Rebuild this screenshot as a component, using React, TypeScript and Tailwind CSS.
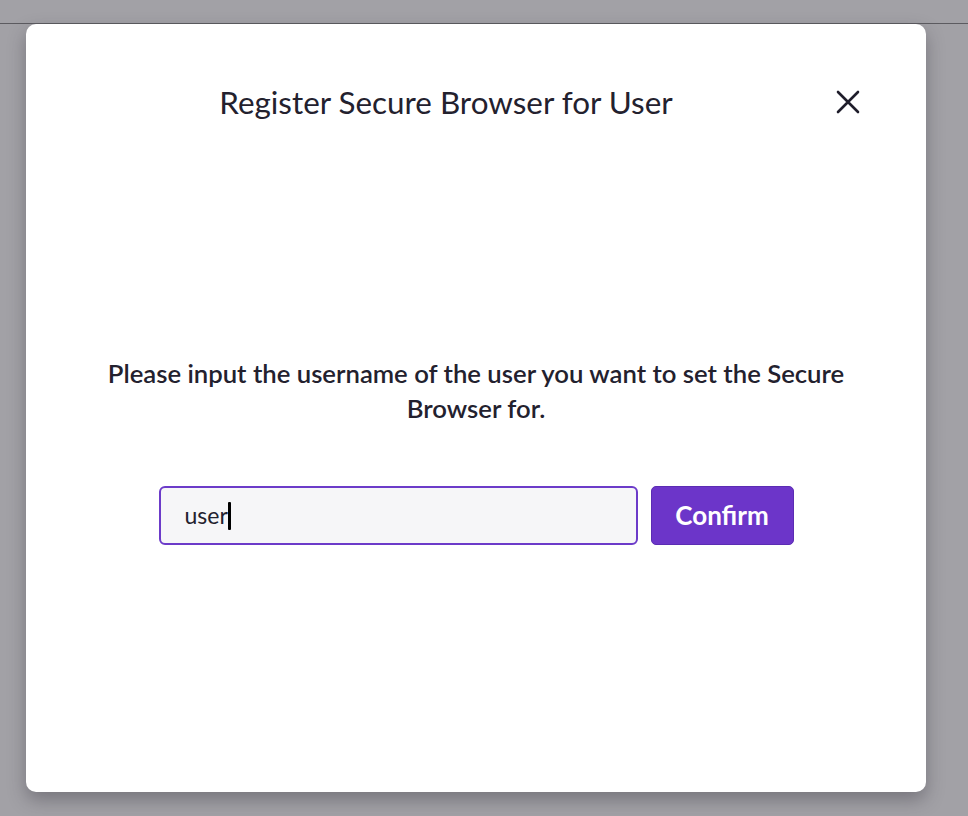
import React from "react";

function CloseIcon() {
  return (
    <svg width="24" height="24" viewBox="0 0 24 24" fill="none">
      <path d="M2 2L22 22M22 2L2 22" stroke="#1f1d2b" strokeWidth="2.6" strokeLinecap="round" />
    </svg>
  );
}

export default function App() {
  return (
    <div
      className="min-h-screen bg-[#a2a1a6] overflow-hidden"
      style={{ fontFamily: "Lato, 'Noto Sans', sans-serif" }}
    >
      <div className="h-[24px] border-b border-[#5c5b60]" />

      <div className="ml-[26px] w-[900px] h-[768px] rounded-[10px] bg-white shadow-[0_8px_18px_rgba(40,38,48,0.35)] flex flex-col">
        <div className="flex items-center pt-[48px] px-12">
          <h2 className="flex-1 text-center text-[31.4px] text-[#23212e] leading-[60px]">
            Register Secure Browser for User
          </h2>
          <button className="w-[60px] h-[60px] flex items-center justify-center">
            <CloseIcon />
          </button>
        </div>

        <p className="mt-[224px] text-center text-[25.7px] leading-[35px] font-semibold text-[#23212e]">
          Please input the username of the user you want to set the Secure
          <br />
          Browser for.
        </p>

        <div className="mt-[60px] flex justify-center gap-[13px]">
          <div className="w-[479px] h-[59px] border-2 border-[#6c3bc9] rounded-[6px] bg-[#f6f6f8] pl-[24px] flex items-center text-[23px] text-[#23212e]">
            <span>user</span>
            <span className="w-[3px] h-[28px] bg-black rounded-[1px]" />
          </div>
          <button className="w-[143px] h-[59px] rounded-[5px] bg-[#6c35c9] border border-[#5b2cb3] text-white text-[26px] font-bold">
            Confirm
          </button>
        </div>
      </div>
    </div>
  );
}
